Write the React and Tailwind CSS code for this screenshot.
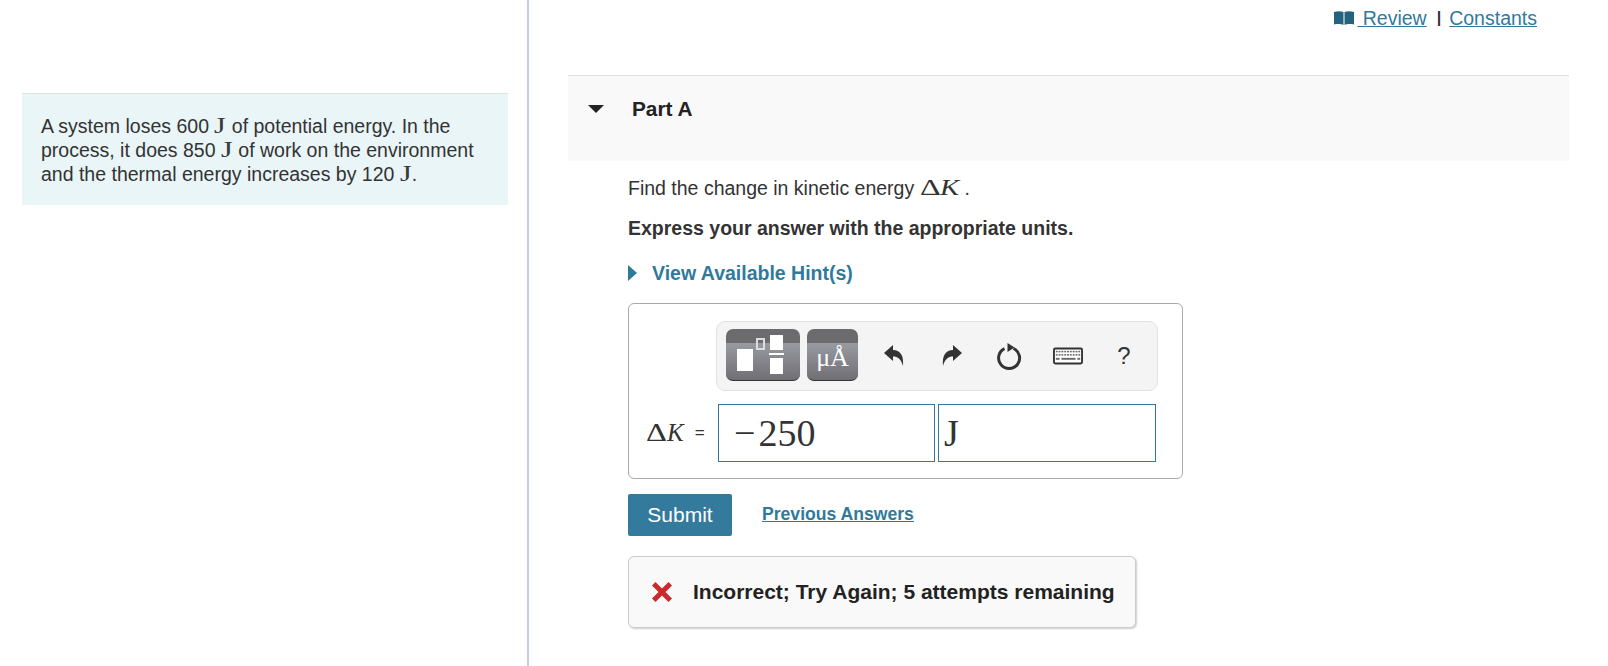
const MATH = "font-['Liberation_Serif',serif]"

// the math glyphs in the reference are much wider than Times, so stretch them
function Wide({ w, sx, children }) {
  return (
    <span className={`inline-block origin-left ${sx}`} style={{ width: w }}>
      {children}
    </span>
  )
}

function JUnit() {
  return (
    <span className={`${MATH} text-[23px] leading-[20px] text-[#3a3a3a]`}>
      <Wide w={12} sx="scale-x-[1.3]">J</Wide>
    </span>
  )
}

function DeltaK() {
  return (
    <span className={`${MATH} text-[23px] leading-[20px]`}>
      <Wide w={20} sx="scale-x-[1.4]">Δ</Wide>
      <Wide w={22} sx="scale-x-[1.25]"><i>K</i></Wide>
    </span>
  )
}

function UndoIcon({ flip }) {
  return (
    <svg width="22" height="24" viewBox="0 0 22 24" className={flip ? '-scale-x-100' : ''}>
      <path d="M1 9 L10 1 V6 C17 6 21 11 20 22 C18 15 15 12.5 10 12.5 V17 Z" fill="#333" />
    </svg>
  )
}

function RefreshIcon() {
  return (
    <svg width="28" height="30" viewBox="0 0 28 30">
      <path d="M17.5 7.5 A10.5 10.5 0 1 1 8.5 7.6" fill="none" stroke="#333" strokeWidth="3" />
      <path d="M11.5 2 L18.5 6.5 L11.5 11 Z" fill="#333" />
    </svg>
  )
}

function KeyboardIcon() {
  const keys = []
  for (let i = 0; i < 9; i++) keys.push(<rect key={'a' + i} x={3 + i * 3} y="3.5" width="2" height="1.6" fill="#666" />)
  for (let i = 0; i < 9; i++) keys.push(<rect key={'b' + i} x={3 + i * 3} y="7" width="2" height="1.6" fill="#666" />)
  return (
    <svg width="30" height="18" viewBox="0 0 32 18">
      <rect x="1" y="1" width="30" height="16" rx="1.5" fill="#fff" stroke="#333" strokeWidth="2" />
      {keys}
      <rect x="3" y="11" width="4" height="2" fill="#666" />
      <rect x="9" y="11" width="15" height="2" fill="#666" />
      <rect x="26" y="11" width="3" height="2" fill="#666" />
    </svg>
  )
}

function BookIcon() {
  return (
    <svg width="20" height="14" viewBox="0 0 20 14" className="mr-[3px] mt-[5px]">
      <path d="M0 1 C3 0 7 0 9.5 1 V14 C7 12.8 3 12.8 0 13.5 Z M10.5 1 C13 0 17 0 20 1 V13.5 C17 12.8 13 12.8 10.5 14 Z" fill="#24637f" />
    </svg>
  )
}

function ToolButton({ className, children }) {
  return (
    <div className={`relative h-[52px] rounded-[7px] border-b border-[#333] bg-[linear-gradient(#6c6c6e_0,#6c6c6e_27%,#9a9aa2_27%,#6f6f74_100%)] overflow-hidden ${className}`}>
      {children}
    </div>
  )
}

function Cell({ children }) {
  return <div className="flex w-[58px] items-center justify-center">{children}</div>
}

export default function App() {
  return (
    <div className="flex h-[666px] w-[1608px] overflow-hidden bg-white font-['Liberation_Sans',sans-serif] text-[19.5px] leading-[24px] text-[#333]">
      <div className="w-[529px] shrink-0 border-r-2 border-[#c3cfde] pl-[22px] pt-[93px]">
        <div className="h-[112px] w-[486px] border-t border-[#dbe3e8] bg-[#e9f5f7] px-[19px] pt-[20px]">
          A system loses 600 <JUnit /> of potential energy. In the process, it does 850 <JUnit /> of work on the environment and the thermal energy increases by 120 <JUnit />.
        </div>
      </div>

      <div className="flex-1 pl-[39px] pr-[39px]">
        <div className="flex h-[75px] items-start justify-end pr-[32px] pt-[6px] text-[#2f7a9c]">
          <BookIcon />
          <a className="underline whitespace-pre"> Review</a>
          <span className="ml-[10px] mr-[8px] text-[16px] font-bold text-[#333]">|</span>
          <a className="underline">Constants</a>
        </div>

        <div className="flex h-[86px] items-start border-t border-[#e0e0e0] bg-[#f9f9f9] pt-[21px] text-[20.8px] font-bold text-[#222]">
          <div className="ml-[20px] mt-[8px] h-0 w-0 border-x-[8px] border-t-[8px] border-x-transparent border-t-[#222]" />
          <span className="ml-[28px]">Part A</span>
        </div>

        <div className="pl-[60px]">
          <p className="mt-[15px]">
            Find the change in kinetic energy <DeltaK /><span className="ml-[3px]">.</span>
          </p>
          <p className="mt-[16px] font-bold">Express your answer with the appropriate units.</p>
          <div className="mt-[21px] flex items-center font-bold text-[#2f7a9c]">
            <div className="h-0 w-0 border-y-[8px] border-l-[9px] border-y-transparent border-l-[#2f7a9c]" />
            <span className="ml-[15px]">View Available Hint(s)</span>
          </div>

          <div className="mt-[18px] h-[176px] w-[555px] rounded-[6px] border border-[#aaa] pl-[17px] pt-[17px]">
            <div className="ml-[70px] flex h-[70px] w-[442px] items-start rounded-[9px] border border-[#e2e2e2] bg-[#f4f4f4] pl-[9px] pt-[7px]">
              <ToolButton className="w-[74px]">
                <div className="absolute left-[11px] top-[20px] h-[22px] w-[16px] bg-white" />
                <div className="absolute left-[30px] top-[9px] h-[12px] w-[9px] border-2 border-[#ddd]" />
                <div className="absolute left-[44px] top-[6px] h-[15px] w-[13px] bg-white" />
                <div className="absolute left-[43px] top-[24px] h-[2px] w-[15px] bg-white" />
                <div className="absolute left-[44px] top-[29px] h-[16px] w-[13px] bg-white" />
              </ToolButton>
              <ToolButton className={`ml-[7px] w-[51px] pt-[14px] text-center text-[26px] leading-[30px] text-white ${MATH}`}>
                μÅ
              </ToolButton>
              <div className="ml-[7px] flex h-[52px] items-center pt-[2px]">
                <Cell><UndoIcon /></Cell>
                <Cell><UndoIcon flip /></Cell>
                <Cell><RefreshIcon /></Cell>
                <Cell><KeyboardIcon /></Cell>
                <Cell><span className="mr-[4px] text-[24px]">?</span></Cell>
              </div>
            </div>

            <div className="mt-[13px] flex items-center">
              <span className="flex w-[72px] items-center whitespace-nowrap">
                <span className={`${MATH} text-[25px] leading-[20px]`}>
                  <Wide w={21} sx="scale-x-[1.3]">Δ</Wide>
                  <i>K</i>
                </span>
                <span className="ml-[11px] text-[17px]">=</span>
              </span>
              <div className={`flex h-[58px] w-[217px] items-center border border-[#2f7a9c] pl-[15px] text-[38px] ${MATH}`}>−&#8202;250</div>
              <div className={`ml-[3px] flex h-[58px] w-[218px] items-center border border-[#2f7a9c] pl-[5px] text-[38px] ${MATH}`}>J</div>
            </div>
          </div>

          <div className="mt-[15px] flex items-center">
            <button className="h-[42px] w-[104px] rounded-[2px] bg-[#337a9c] text-[21px] text-white">Submit</button>
            <a className="ml-[30px] -mt-[2px] text-[17.6px] font-bold text-[#2f7a9c] underline">Previous Answers</a>
          </div>

          <div className="mt-[20px] flex h-[72px] w-[508px] items-center rounded-[6px] border border-[#ccc] bg-[#f9f9f9] pl-[22px] text-[21px] font-bold text-[#222] shadow-[1px_1px_2px_rgba(0,0,0,0.2)]">
            <svg width="22" height="22" viewBox="0 0 22 22">
              <path d="M4.5 1 L11 7.5 L17.5 1 L21 4.5 L14.5 11 L21 17.5 L17.5 21 L11 14.5 L4.5 21 L1 17.5 L7.5 11 L1 4.5 Z" fill="#cc2a2a" />
            </svg>
            <span className="ml-[20px] whitespace-nowrap">Incorrect; Try Again; 5 attempts remaining</span>
          </div>
        </div>
      </div>
    </div>
  )
}
